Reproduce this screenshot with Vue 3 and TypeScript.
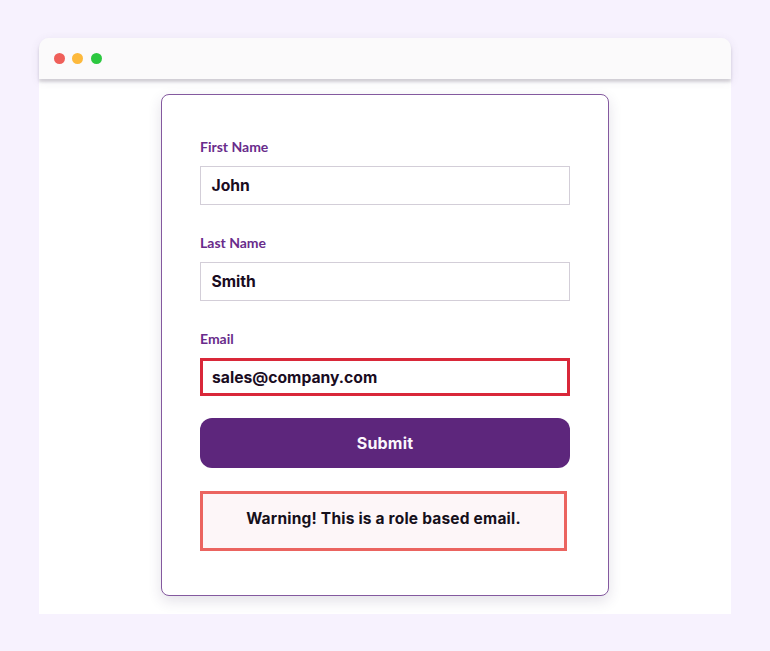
<script setup lang="ts">
interface Field {
  label: string
  value: string
  invalid?: boolean
}

const fields: Field[] = [
  { label: 'First Name', value: 'John' },
  { label: 'Last Name', value: 'Smith' },
  { label: 'Email', value: 'sales@company.com', invalid: true },
]
const dots = ['#ef5f5a', '#fdb93c', '#2cc840']
</script>

<template>
  <main class="page">
    <section class="window">
      <header class="titlebar">
        <span v-for="dot in dots" :key="dot" class="dot" :style="{ background: dot }"></span>
      </header>
      <div class="content">
        <form class="card" @submit.prevent>
          <div v-for="field in fields" :key="field.label" class="field">
            <label class="label">{{ field.label }}</label>
            <div class="input" :class="{ invalid: field.invalid }">{{ field.value }}</div>
          </div>
          <button class="submit" type="submit">Submit</button>
          <div class="warning">Warning! This is a role based email.</div>
        </form>
      </div>
    </section>
  </main>
</template>

<style>
html,
body {
  margin: 0;
  background: #f7f2fe;
}
</style>

<style scoped>
.page {
  box-sizing: border-box;
  width: 770px;
  height: 651px;
  padding: 38px 39px 37px;
  background: #f7f2fe;
  font-family: "Inter", "Liberation Sans", sans-serif;
}
.window {
  display: flex;
  flex-direction: column;
  height: 576px;
  background: #fff;
  border-radius: 10px 10px 0 0;
}
.titlebar {
  display: flex;
  flex: none;
  align-items: center;
  gap: 7.75px;
  box-sizing: border-box;
  height: 41px;
  padding-left: 14.5px;
  background: #fbfafb;
  border-radius: 10px 10px 0 0;
  box-shadow: 0 3px 3px rgba(70, 60, 85, 0.2), 0 2px 10px rgba(80, 65, 110, 0.1);
}
.dot {
  width: 11px;
  height: 11px;
  border-radius: 50%;
}
.content {
  display: flex;
  justify-content: center;
  padding-top: 15px;
}
.card {
  display: flex;
  flex-direction: column;
  box-sizing: border-box;
  width: 448px;
  height: 502px;
  padding: 38px 38px 0;
  background: #fff;
  border: 1px solid #84599f;
  border-radius: 8px;
  box-shadow: 0 5px 14px rgba(60, 40, 90, 0.14);
}
.field {
  display: flex;
  flex-direction: column;
  margin-bottom: 24px;
}
.field:nth-of-type(3) {
  margin-bottom: 22px;
}
.label {
  height: 33px;
  font-family: "Lato", "Liberation Sans", sans-serif;
  font-size: 14px;
  font-weight: 700;
  line-height: 28px;
  color: #692c8b;
}
.input {
  box-sizing: border-box;
  width: 370px;
  height: 39px;
  padding-left: 10.5px;
  background: #fff;
  border: 1.5px solid #d3ced8;
  font-size: 15.7px;
  font-weight: 700;
  line-height: 37px;
  color: #1a0c1f;
}
.input.invalid {
  height: 38px;
  border: 3px solid #d92839;
  padding-left: 9px;
  line-height: 33px;
}
.submit {
  flex: none;
  width: 370px;
  height: 50px;
  background: #5d267c;
  border: 0;
  border-radius: 12px;
  font-family: inherit;
  font-size: 16px;
  font-weight: 700;
  letter-spacing: 0.2px;
  color: #fbf6fc;
}
.warning {
  box-sizing: border-box;
  width: 367px;
  height: 60px;
  margin-top: 23px;
  background: #fdf6f8;
  border: 3px solid #eb6460;
  font-size: 15.5px;
  font-weight: 700;
  letter-spacing: 0.2px;
  line-height: 50px;
  text-align: center;
  color: #15101b;
}
</style>
